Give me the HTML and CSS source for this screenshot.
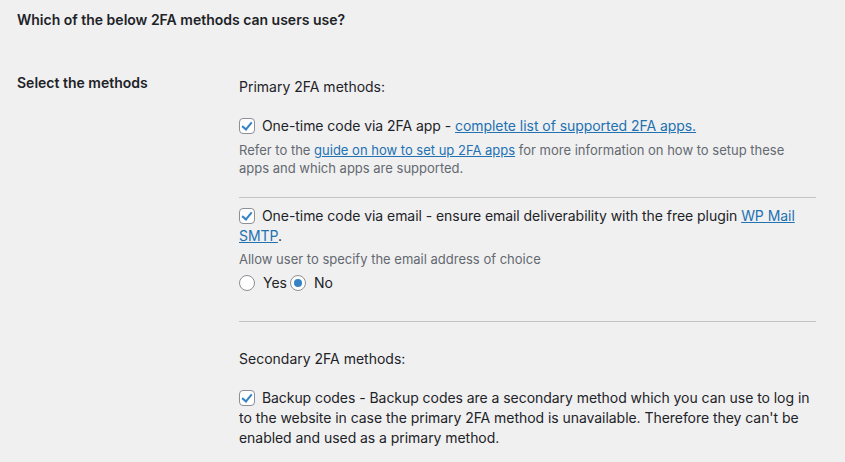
FILE: index.html
```html
<!DOCTYPE html>
<html lang="en">
<head>
    <meta charset="UTF-8">
    <meta name="viewport" content="width=device-width, initial-scale=1.0">
    <title>Two-factor authentication settings</title>
    <link rel="stylesheet" href="styles.css">
</head>
<body>

    <h2 class="section-title">Which of the below 2FA methods can users use?</h2>

    <div class="form-row">
        <div class="form-label">Select the methods</div>
        <div class="form-field">
            <p class="group-title">Primary 2FA methods:</p>

            <div class="method">
                <label class="check-line">
                    <input type="checkbox" checked>
                    One-time code via 2FA app - <a href="#">complete list of supported 2FA apps.</a>
                </label>
                <p class="description">Refer to the <a href="#">guide on how to set up 2FA apps</a> for more information on how to setup these apps and which apps are supported.</p>
            </div>

            <hr class="divider">

            <div class="method">
                <label class="check-line">
                    <input type="checkbox" checked>
                    One-time code via email - ensure email deliverability with the free plugin <a href="#">WP Mail SMTP</a>.
                </label>
                <p class="description option-title">Allow user to specify the email address of choice</p>
                <div class="radio-line">
                    <label><input type="radio" name="custom-email"> Yes</label>
                    <label><input type="radio" name="custom-email" checked> No</label>
                </div>
            </div>

            <hr class="divider divider-wide">

            <p class="group-title">Secondary 2FA methods:</p>

            <div class="method">
                <label class="check-line">
                    <input type="checkbox" checked>
                    Backup codes - Backup codes are a secondary method which you can use to log in to the website in case the primary 2FA method is unavailable. Therefore they can't be enabled and used as a primary method.
                </label>
            </div>
        </div>
    </div>

</body>
</html>
```

FILE: styles.css
```css
body {
    margin: 0;
    padding: 0 29px 0 17px;
    background-color: #f0f0f1;
    color: #1d2327;
    font-family: Inter, "Noto Sans", sans-serif;
    font-size: 14px;
}
a {
    color: #2271b1;
    text-decoration: underline;
}
.section-title {
    margin: 0;
    padding-top: 10px;
    font-size: 14px;
    font-weight: 600;
    line-height: 20px;
}
.form-row {
    display: grid;
    grid-template-columns: 222px 1fr;
    margin-top: 23px;
}
.form-label {
    padding-top: 20px;
    font-weight: 600;
    line-height: 20px;
}
.form-field {
    padding-top: 24px;
}
.group-title {
    margin: 0;
    line-height: 20px;
}
.method {
    margin-top: 19px;
}
.check-line {
    display: block;
    line-height: 20px;
    letter-spacing: -0.05px;
}
.check-line input {
    margin: 0 3px 0 0;
    vertical-align: -3px;
}
.description {
    margin: 5px 0 0;
    color: #646970;
    font-size: 13px;
    line-height: 18px;
}
.option-title {
    margin-top: 4px;
}
.radio-line {
    display: flex;
    gap: 3px;
    margin-top: 5px;
    line-height: 20px;
}
.radio-line label {
    display: flex;
    align-items: center;
}
.radio-line input {
    margin: 0 8px 0 0;
}
.divider {
    margin: 20px 0 0;
    border: none;
    border-top: 1px solid #c3c4c7;
}
.divider-wide {
    margin-top: 28px;
}
.divider-wide + .group-title {
    margin-top: 27px;
}
.divider + .method {
    margin-top: 8px;
}

/* WordPress style form controls */
input[type="checkbox"],
input[type="radio"] {
    appearance: none;
    width: 16px;
    height: 16px;
    border: 1px solid #8c8f94;
    background-color: #fff;
    box-sizing: border-box;
    cursor: pointer;
}
input[type="checkbox"] {
    border-radius: 4px;
    position: relative;
}
input[type="checkbox"]:checked::before {
    content: "";
    position: absolute;
    left: 4px;
    top: 1px;
    width: 4px;
    height: 8px;
    border: solid #3582c4;
    border-width: 0 2.5px 2.5px 0;
    transform: rotate(40deg);
}
input[type="radio"] {
    border-radius: 50%;
    display: inline-flex;
    align-items: center;
    justify-content: center;
}
input[type="radio"]:checked::before {
    content: "";
    width: 8px;
    height: 8px;
    border-radius: 50%;
    background-color: #3582c4;
}
```
